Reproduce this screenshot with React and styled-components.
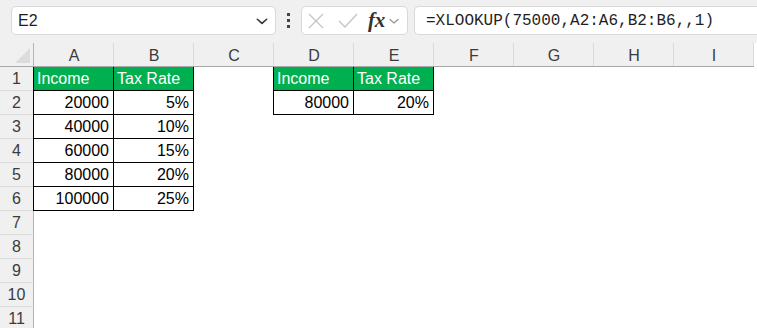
import React from "react";
import styled, { createGlobalStyle } from "styled-components";

const GlobalStyle = createGlobalStyle`
  html, body {
    margin: 0;
    padding: 0;
    background: #ffffff;
    overflow: hidden;
  }
  body {
    font-family: "Liberation Sans", Arial, sans-serif;
  }
`;

const Page = styled.div`
  width: 757px;
  height: 328px;
  overflow: hidden;
  background: #ffffff;
`;

const Toolbar = styled.div`
  height: 43px;
  background: #f0f0f0;
  display: flex;
  align-items: flex-start;
  padding: 6px 0 0 11px;
  box-sizing: border-box;
`;

const Box = styled.div`
  height: 29px;
  box-sizing: border-box;
  background: #ffffff;
  border: 1px solid #d9d9d9;
  border-radius: 5px;
  display: flex;
  align-items: center;
`;

const NameBox = styled(Box)`
  width: 265px;
  padding: 0 6px 0 6px;
  justify-content: space-between;
  font-size: 16px;
  color: #1f1f1f;
`;

const Dots = styled.div`
  width: 25px;
  height: 29px;
  display: flex;
  flex-direction: column;
  align-items: center;
  justify-content: center;
  gap: 3px;

  span {
    width: 3px;
    height: 3px;
    background: #444;
  }
`;

const FxBox = styled(Box)`
  width: 107px;
  padding: 0 0 0 5px;
  gap: 0;
`;

const FxText = styled.span`
  font-family: "Liberation Serif", "Times New Roman", serif;
  font-style: italic;
  font-weight: 600;
  font-size: 21px;
  color: #333;
  margin: 0 3px 0 9px;
  letter-spacing: -0.3px;
`;

const FormulaBox = styled(Box)`
  flex: 1;
  margin-left: 6px;
  border-right: none;
  border-radius: 5px 0 0 5px;
  padding-left: 11px;
  font-family: "Liberation Mono", "Courier New", monospace;
  font-size: 16px;
  color: #1f1f1f;
`;

const Sheet = styled.div`
  display: grid;
  grid-template-columns: 34px repeat(9, 80px);
  grid-auto-rows: 24px;
`;

const Corner = styled.div`
  background: #f0f0f0;
  border-right: 1px solid #b5b5b5;
  border-bottom: 1px solid #a8a8a8;
  position: relative;

  &::after {
    content: "";
    position: absolute;
    right: 3px;
    bottom: 3px;
    width: 0;
    height: 0;
    border-left: 15px solid transparent;
    border-bottom: 15px solid #dcdcdc;
  }
`;

const ColHead = styled.div`
  background: #f0f0f0;
  border-bottom: 1px solid #a8a8a8;
  box-shadow: inset -1px 0 0 #dadada;
  display: flex;
  align-items: center;
  justify-content: center;
  font-size: 16px;
  color: #3b3b3b;
  padding-top: 2px;
`;

const RowHead = styled.div`
  background: #f0f0f0;
  border-right: 1px solid #b5b5b5;
  border-bottom: 1px solid #dadada;
  display: flex;
  align-items: center;
  justify-content: center;
  font-size: 16px;
  color: #3b3b3b;
`;

const Cell = styled.div`
  display: flex;
  align-items: center;
  justify-content: ${(p) => (p.$head ? "flex-start" : "flex-end")};
  padding: 1px 4px 0 3px;
  font-size: 16px;
  color: ${(p) => (p.$head ? "#ffffff" : "#000000")};
  background: ${(p) => (p.$head ? "#00b050" : "#ffffff")};
  border-right: ${(p) => (p.$boxed ? "1px solid #000" : "none")};
  border-bottom: ${(p) => (p.$boxed ? "1px solid #000" : "none")};
  border-left: ${(p) => (p.$left ? "1px solid #000" : "none")};
  margin-left: ${(p) => (p.$left ? "-1px" : "0")};
`;

const Chevron = ({ color = "#333", size = 12 }) => (
  <svg width={size} height={size} viewBox="0 0 12 12" fill="none">
    <path d="M2 4.5 L6 8 L10 4.5" stroke={color} strokeWidth="1.4" strokeLinecap="round" strokeLinejoin="round" />
  </svg>
);

const CrossIcon = () => (
  <svg width="18" height="18" viewBox="0 0 18 18" fill="none">
    <path d="M2 2 L16 16 M16 2 L2 16" stroke="#c4c4c4" strokeWidth="1.3" />
  </svg>
);

const CheckIcon = () => (
  <svg width="22" height="18" viewBox="0 0 22 18" fill="none" style={{ marginLeft: 12 }}>
    <path d="M2 9 L8 15 L20 2" stroke="#c4c4c4" strokeWidth="1.3" />
  </svg>
);

const columns = ["A", "B", "C", "D", "E", "F", "G", "H", "I"];

// table contents: [row][col] -> value, header rows in green
const data = {
  1: { A: "Income", B: "Tax Rate", D: "Income", E: "Tax Rate" },
  2: { A: "20000", B: "5%", D: "80000", E: "20%" },
  3: { A: "40000", B: "10%" },
  4: { A: "60000", B: "15%" },
  5: { A: "80000", B: "20%" },
  6: { A: "100000", B: "25%" },
};

const isBoxed = (row, col) => {
  if (row >= 1 && row <= 6 && (col === "A" || col === "B")) return true;
  if (row >= 1 && row <= 2 && (col === "D" || col === "E")) return true;
  return false;
};

const App = () => {
  const rows = Array.from({ length: 11 }, (_, i) => i + 1);

  return (
    <Page>
      <GlobalStyle />
      <Toolbar>
        <NameBox>
          <span>E2</span>
          <Chevron size={14} />
        </NameBox>
        <Dots>
          <span />
          <span />
          <span />
        </Dots>
        <FxBox>
          <CrossIcon />
          <CheckIcon />
          <FxText>fx</FxText>
          <Chevron color="#9a9a9a" size={12} />
        </FxBox>
        <FormulaBox>=XLOOKUP(75000,A2:A6,B2:B6,,1)</FormulaBox>
      </Toolbar>
      <Sheet>
        <Corner />
        {columns.map((c) => (
          <ColHead key={c}>{c}</ColHead>
        ))}
        {rows.map((r) => (
          <React.Fragment key={r}>
            <RowHead>{r}</RowHead>
            {columns.map((c) => {
              const boxed = isBoxed(r, c);
              return (
                <Cell
                  key={c}
                  $boxed={boxed}
                  $head={r === 1 && boxed}
                  $left={boxed && (c === "A" || c === "D")}
                >
                  {data[r] && data[r][c]}
                </Cell>
              );
            })}
          </React.Fragment>
        ))}
      </Sheet>
    </Page>
  );
};

export default App;
